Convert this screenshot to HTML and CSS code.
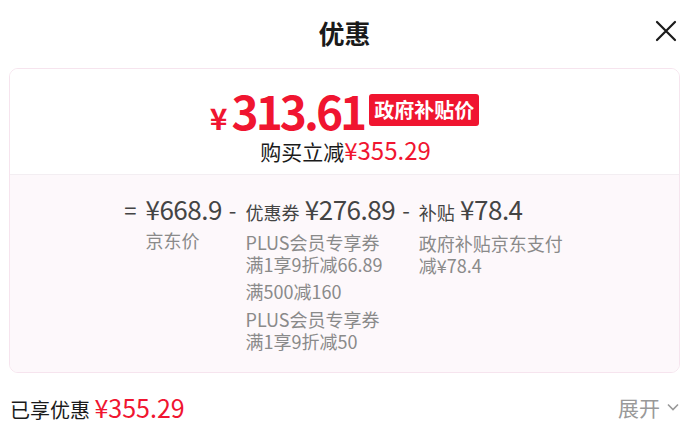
FILE: index.html
```html
<!DOCTYPE html>
<html lang="zh-CN">
<head>
    <meta charset="UTF-8">
    <meta name="viewport" content="width=device-width, initial-scale=1.0">
    <title>优惠</title>
    <link rel="stylesheet" href="styles.css">
</head>
<body>
    <div class="sheet">
        <div class="sheet-header">
            <h1>优惠</h1>
            <span class="close">
                <svg width="22" height="22" viewBox="0 0 22 22"><path d="M2 2L20 20M20 2L2 20" stroke="#1a1a1a" stroke-width="2.2" stroke-linecap="round"/></svg>
            </span>
        </div>

        <div class="card">
            <div class="card-top">
                <div class="final-price">
                    <span class="price"><span class="yen">¥</span>313.61</span>
                    <span class="badge">政府补贴价</span>
                </div>
                <div class="saving">购买立减<span class="red">¥355.29</span></div>
            </div>
            <div class="card-bottom">
                <div class="formula">
                    <span class="op">=</span>
                    <div class="term">
                        <div class="amount">¥668.9</div>
                        <div class="desc">京东价</div>
                    </div>
                    <span class="op">-</span>
                    <div class="term">
                        <div class="amount"><span class="label">优惠券</span> ¥276.89</div>
                        <div class="desc">PLUS会员专享券<br>满1享9折减66.89</div>
                        <div class="desc">满500减160</div>
                        <div class="desc">PLUS会员专享券<br>满1享9折减50</div>
                    </div>
                    <span class="op">-</span>
                    <div class="term">
                        <div class="amount"><span class="label">补贴</span> ¥78.4</div>
                        <div class="desc">政府补贴京东支付<br>减¥78.4</div>
                    </div>
                </div>
            </div>
        </div>

        <div class="summary">
            <div class="total">已享优惠 <span class="red">¥355.29</span></div>
            <div class="expand">展开
                <svg width="14" height="14" viewBox="0 0 14 14"><path d="M2 4.5L7 9.5L12 4.5" fill="none" stroke="#999" stroke-width="1.6"/></svg>
            </div>
        </div>
    </div>
</body>
</html>
```

FILE: styles.css
```css
body {
    margin: 0;
    background-color: #ffffff;
    font-family: "Noto Sans CJK SC", "Noto Sans", sans-serif;
    color: #1a1a1a;
}
.sheet {
    padding: 0 17px 0 9px;
}
.sheet-header {
    position: relative;
    height: 68px;
    display: flex;
    justify-content: center;
    align-items: center;
}
.sheet-header h1 {
    margin: 0;
    font-size: 26px;
    font-weight: bold;
    line-height: 1;
    margin-top: -3px;
}
.close {
    position: absolute;
    right: 3px;
    top: 20px;
    display: flex;
}
.card {
    border: 1px solid #f6e4ee;
    border-radius: 9px;
    overflow: hidden;
}
.card-top {
    background-color: #ffffff;
    padding: 15px 0 9px;
    display: flex;
    flex-direction: column;
    align-items: center;
    border-bottom: 1px solid #f3eef2;
}
.final-price {
    display: flex;
    align-items: center;
    gap: 5px;
    height: 52px;
}
.price {
    color: #f01530;
    font-size: 46px;
    font-weight: bold;
    line-height: 1;
    letter-spacing: -3px;
}
.price .yen {
    font-size: 30px;
    margin-right: 4px;
    letter-spacing: 0;
}
.badge {
    background-color: #f01530;
    color: #ffffff;
    font-size: 20px;
    font-weight: bold;
    border-radius: 3px;
    padding: 2px 5px;
    line-height: 28px;
}
.saving {
    font-size: 21px;
    line-height: 28px;
    margin-left: 2px;
}
.saving .red {
    font-size: 24px;
}
.red {
    color: #f01530;
}
.card-bottom {
    background-color: #fdf8fb;
    padding: 18px 0 20px;
}
.formula {
    display: flex;
    justify-content: center;
    gap: 7px;
    color: #444444;
    margin-right: 2px;
}
.op {
    font-size: 22px;
    line-height: 32px;
    margin-right: 2px;
}
.term {
    display: flex;
    flex-direction: column;
    gap: 5px;
}
.term .desc:last-child {
    margin-top: 1px;
}
.amount {
    font-size: 26px;
    line-height: 32px;
    letter-spacing: -0.5px;
    margin-bottom: -2px;
    white-space: nowrap;
}
.amount .label {
    font-size: 18px;
    letter-spacing: 0;
}
.desc {
    font-size: 18px;
    line-height: 22px;
    color: #8a8a8a;
    white-space: nowrap;
}
.summary {
    display: flex;
    justify-content: space-between;
    align-items: center;
    height: 68px;
    padding-left: 1px;
}
.total {
    font-size: 20px;
}
.total .red {
    font-size: 25px;
}
.expand {
    display: flex;
    align-items: center;
    gap: 6px;
    color: #999999;
    font-size: 21px;
}
```
